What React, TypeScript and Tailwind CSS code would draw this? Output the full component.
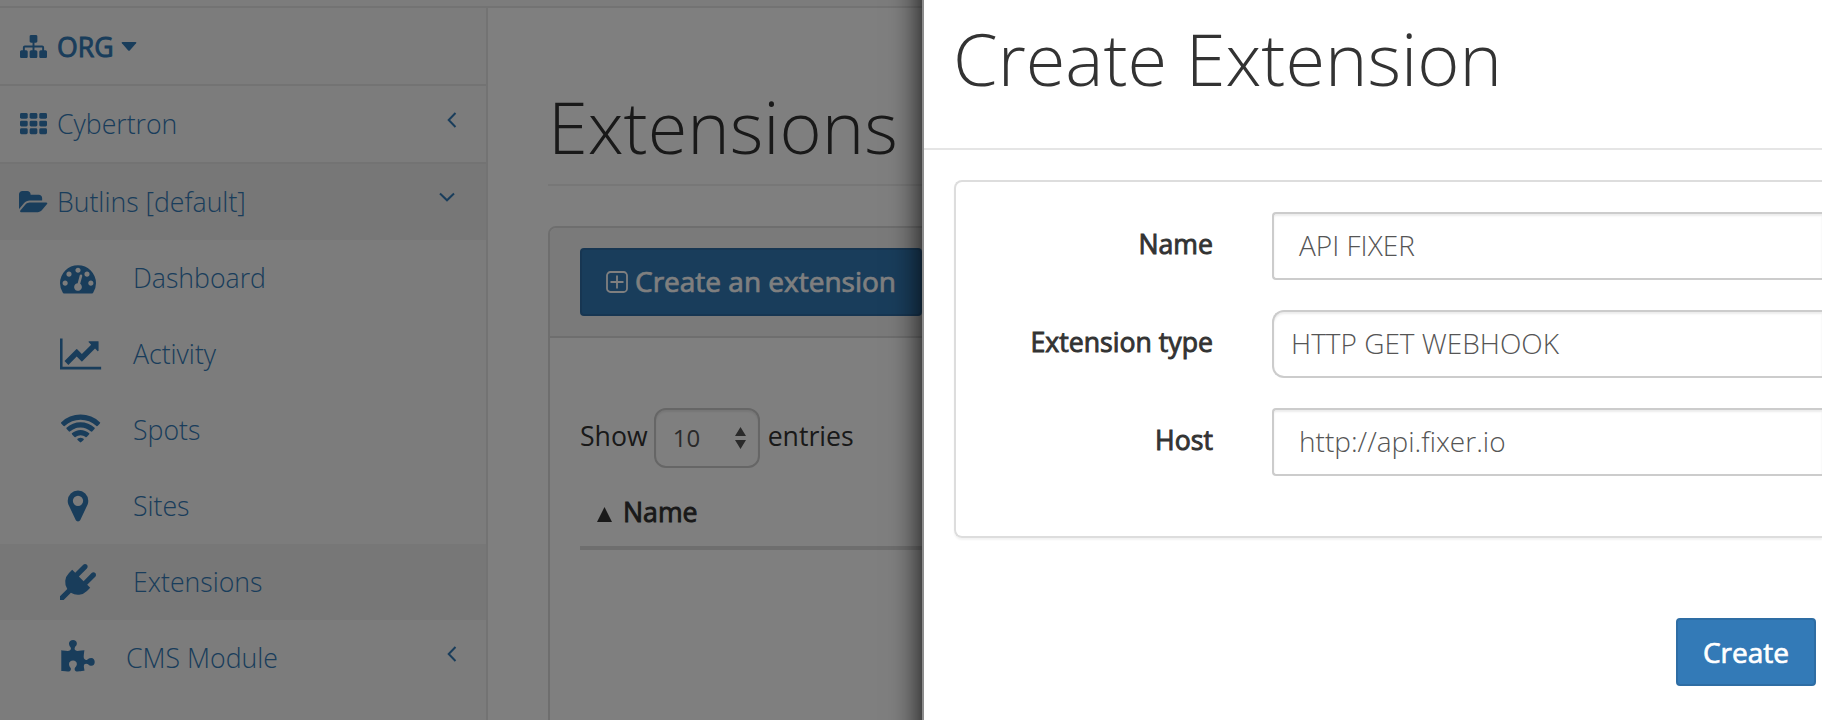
import React from "react";

const PATHS = {
  sitemap:
    "M1792 1248v320q0 40-28 68t-68 28h-320q-40 0-68-28t-28-68v-320q0-40 28-68t68-28h96v-192h-512v192h96q40 0 68 28t28 68v320q0 40-28 68t-68 28h-320q-40 0-68-28t-28-68v-320q0-40 28-68t68-28h96v-192h-512v192h96q40 0 68 28t28 68v320q0 40-28 68t-68 28h-320q-40 0-68-28t-28-68v-320q0-40 28-68t68-28h96v-192q0-52 38-90t90-38h512v-192h-96q-40 0-68-28t-28-68v-320q0-40 28-68t68-28h320q40 0 68 28t28 68v320q0 40-28 68t-68 28h-96v192h512q52 0 90 38t38 90v192h96q40 0 68 28t28 68z",
  folder:
    "M1879 952q0 31-31 66l-336 396q-43 51-120.5 86.5t-143.5 35.5h-1088q-34 0-60.5-13t-26.5-43q0-31 31-66l336-396q43-51 120.5-86.5t143.5-35.5h1088q34 0 60.5 13t26.5 43zm-343-344v160h-832q-94 0-197 47.5t-164 119.5l-337 396-5 6q0-4-.5-12.5t-.5-12.5v-960q0-92 66-158t158-66h320q92 0 158 66t66 158v32h544q92 0 158 66t66 158z",
  gauge:
    "M384 1152q0-53-37.5-90.5t-90.5-37.5-90.5 37.5-37.5 90.5 37.5 90.5 90.5 37.5 90.5-37.5 37.5-90.5zm192-448q0-53-37.5-90.5t-90.5-37.5-90.5 37.5-37.5 90.5 37.5 90.5 90.5 37.5 90.5-37.5 37.5-90.5zm428 481l101-382q6-26-7.5-48.5t-38.5-29.5-48 6.5-30 39.5l-101 382q-60 5-107 43.5t-63 98.5q-20 77 20 146t117 89 146-20 89-117q16-60-6-117t-72-91zm660-33q0-53-37.5-90.5t-90.5-37.5-90.5 37.5-37.5 90.5 37.5 90.5 90.5 37.5 90.5-37.5 37.5-90.5zm-640-640q0-53-37.5-90.5t-90.5-37.5-90.5 37.5-37.5 90.5 37.5 90.5 90.5 37.5 90.5-37.5 37.5-90.5zm448 192q0-53-37.5-90.5t-90.5-37.5-90.5 37.5-37.5 90.5 37.5 90.5 90.5 37.5 90.5-37.5 37.5-90.5zm320 448q0 261-141 483-19 29-54 29h-1402q-35 0-54-29-141-221-141-483 0-182 71-348t191-286 286-191 348-71 348 71 286 191 191 286 71 348z",
  chart:
    "M2048 1536v128h-2048v-1536h128v1408h1920zm-128-1248v435q0 21-19.5 29.5t-35.5-7.5l-121-121-633 633q-10 10-23 10t-23-10l-233-233-416 416-192-192 585-585q10-10 23-10t23 10l233 233 464-464-121-121q-16-16-7.5-35.5t29.5-19.5h435q14 0 23 9t9 23z",
  wifi: "M1024 1523q-20 0-93-73.5t-73-93.5q0-32 62.5-54t103.5-22 103.5 22 62.5 54q0 20-73 93.5t-93 73.5zm270-271q-2 0-40-25t-101.5-50-128.5-25-128.5 25-101 50-40.5 25q-18 0-93.5-75t-75.5-93q0-13 10-23 78-77 196-121t233-44 233 44 196 121q10 10 10 23 0 18-75.5 93t-93.5 75zm273-272q-11 0-23-8-136-105-252-154.5t-268-49.5q-85 0-170.5 22t-149 53-113.5 62-79 53-31 22q-17 0-92-75t-75-93q0-12 10-22 132-132 320-205t380-73 380 73 320 205q10 10 10 22 0 18-75 93t-92 75zm271-271q-11 0-22-9-179-157-371.5-236.5t-420.5-79.5-420.5 79.5-371.5 236.5q-11 9-22 9-17 0-92.5-75t-75.5-93q0-13 10-23 187-186 445-288t527-102 527 102 445 288q10 10 10 23 0 18-75.5 93t-92.5 75z",
  marker:
    "M1152 640q0-106-75-181t-181-75-181 75-75 181 75 181 181 75 181-75 75-181zm256 0q0 109-33 179l-364 774q-16 33-47.5 52t-67.5 19-67.5-19-46.5-52l-365-774q-33-70-33-179 0-212 150-362t362-150 362 150 150 362z",
  plug: "M1755 453q37 38 37 90.5t-37 90.5l-401 400 150 150-160 160q-163 163-389.5 186.5t-411.5-100.5l-362 362h-181v-181l362-362q-124-185-100.5-411.5t186.5-389.5l160-160 150 150 400-401q38-37 91-37t90 37 37 90.5-37 90.5l-400 401 234 234 401-400q38-37 91-37t90 37z",
  puzzle:
    "M1728 1098q0 81-44.5 135t-123.5 54q-41 0-77.5-17.5t-59-38-56.5-38-71-17.5q-110 0-110 124 0 39 16 115t15 115v5q-22 0-33 1-34 3-97.5 11.5t-115.5 13.5-98 5q-61 0-103-26.5t-42-83.5q0-37 17.5-71t38-56.5 38-59 17.5-77.5q0-79-54-123.5t-135-44.5q-84 0-143 45.5t-59 127.5q0 43 15 83t33.5 64.5 33.5 53 15 50.5q0 45-46 89-37 35-117 35-95 0-245-24-9-2-27.5-4t-27.5-4l-13-2q-1 0-3-1-2 0-2-1v-1024q2 1 17.5 3.5t34 5 21.5 3.5q150 24 245 24 80 0 117-35 46-44 46-89 0-22-15-50.5t-33.5-53-33.5-64.5-15-83q0-82 59-127.5t144-45.5q80 0 134 44.5t54 123.5q0 41-17.5 77.5t-38 59-38 56.5-17.5 71q0 57 42 83.5t103 26.5q64 0 180-15t163-17v2q-1 2-3.5 17.5t-5 34-3.5 21.5q-24 150-24 245 0 80 35 117 44 46 89 46 22 0 50.5-15t53-33.5 64.5-33.5 83-15q82 0 127.5 59t45.5 143z",
};

type IconName = keyof typeof PATHS;

function Icon({ name, className }: { name: IconName; className: string }) {
  return (
    <svg viewBox="0 0 1792 1792" fill="currentColor" className={`shrink-0 overflow-visible ${className}`}>
      <path d={PATHS[name]} />
    </svg>
  );
}

function GridIcon({ className }: { className: string }) {
  const cols = [0, 640, 1280];
  const rows = [128, 640, 1152];
  return (
    <svg viewBox="0 0 1792 1792" fill="currentColor" className={`shrink-0 ${className}`}>
      {rows.map((y) => cols.map((x) => <rect key={`${x}-${y}`} x={x} y={y} width="512" height="384" rx="96" />))}
    </svg>
  );
}

function AngleLeft() {
  return (
    <svg viewBox="0 0 10 16" className="mr-[29px] mb-[9px] ml-auto h-4 w-[10px]" fill="none" stroke="currentColor" strokeWidth="2">
      <path d="M8.5 1 1.700 8l6.800 7" />
    </svg>
  );
}

function AngleDown() {
  return (
    <svg viewBox="0 0 16 10" className="mr-[31px] mb-[10px] ml-auto h-[10px] w-4" fill="none" stroke="currentColor" strokeWidth="2">
      <path d="M1 1.500 8 8.300l7-6.800" />
    </svg>
  );
}

const SUB_ITEMS: { icon: IconName; label: string; active?: boolean }[] = [
  { icon: "gauge", label: "Dashboard" },
  { icon: "chart", label: "Activity" },
  { icon: "wifi", label: "Spots" },
  { icon: "marker", label: "Sites" },
  { icon: "plug", label: "Extensions", active: true },
];

function Sidebar() {
  return (
    <nav className="w-[488px] shrink-0 border-r-2 border-[#e7e7e7] bg-[#f8f8f8] text-[#337ab7]">
      <div className="flex h-[78px] items-center border-b-2 border-[#e7e7e7] pl-[20px]">
        <Icon name="sitemap" className="size-[27px]" />
        <span className="mt-0.5 ml-[10px] font-normal [-webkit-text-stroke:0.9px_currentColor]">ORG</span>
        <svg viewBox="0 0 16 9" fill="currentColor" className="ml-[7px] h-[9px] w-4">
          <path d="M1.500 0h13q1.500 0 .6 1.200L9 8.300q-1 1-2 0L.9 1.200Q0 0 1.500 0Z" />
        </svg>
      </div>
      <div className="flex h-[78px] items-center border-b-2 border-[#e7e7e7] pl-[20px]">
        <GridIcon className="size-[27px]" />
        <span className="ml-[10px]">Cybertron</span>
        <AngleLeft />
      </div>
      <div className="flex h-[76px] items-center bg-[#eee] pl-[19px]">
        <Icon name="folder" className="size-[27px]" />
        <span className="ml-[11px]">Butlins [default]</span>
        <AngleDown />
      </div>
      {SUB_ITEMS.map((item) => (
        <div key={item.label} className={`flex h-[76px] items-center pl-[60px] ${item.active ? "bg-[#eee]" : ""}`}>
          <Icon name={item.icon} className="size-[36px]" />
          <span className="ml-[37px]">{item.label}</span>
        </div>
      ))}
      <div className="flex h-[76px] items-center pl-[60px]">
        <Icon name="puzzle" className="size-[36px]" />
        <span className="ml-[30px]">CMS Module</span>
        <AngleLeft />
      </div>
    </nav>
  );
}

function Content() {
  return (
    <main className="flex-1 pt-[69px] pl-[60px]">
      <div className="h-[109px] border-b-2 border-[#eee]">
        <h1 className="text-[72px] leading-[98px] text-[#333]">Extensions</h1>
      </div>
      <section className="mt-10 h-[600px] rounded-lg border-2 border-[#ddd] bg-white">
        <div className="h-[110px] rounded-t-md border-b-2 border-[#ddd] bg-[#f5f5f5] px-[30px] py-5">
          <button className="flex h-[68px] w-[342px] items-center rounded border-2 border-[#2e6da4] bg-[#337ab7] pl-6 text-[28px] text-white">
            <svg viewBox="0 0 22 22" fill="none" stroke="currentColor" strokeWidth="1.800" className="size-[22px]">
              <rect x="1" y="1" width="20" height="20" rx="3.500" />
              <path d="M11 4.500v13M4.500 11h13" />
            </svg>
            <span className="ml-[7px] pb-0.5 font-normal [-webkit-text-stroke:0.7px_currentColor]">Create an extension</span>
          </button>
        </div>
        <div className="px-[30px] pt-[70px] font-normal text-[#333]">
          <div className="flex h-[60px] items-center">
            <span className="pb-1">Show</span>
            <span className="mr-[8px] ml-[6px] flex h-[60px] w-[106px] items-center justify-between rounded-xl border-2 border-[#ccc] bg-white pr-[12px] pl-[17px] text-[24px] text-[#555] shadow-[inset_0_2px_2px_rgba(0,0,0,0.075)]">
              <span className="pb-px">10</span>
              <svg viewBox="0 0 11 22" className="h-[22px] w-[11px] fill-[#555]">
                <path d="M5.500 0 11 9H0ZM5.500 22 11 13H0Z" />
              </svg>
            </span>
            <span className="pb-1">entries</span>
          </div>
          <div className="flex h-[82px] items-center border-b-4 border-[#ddd] pl-[17px]">
            <svg viewBox="0 0 15 15" className="mt-[15px] size-[15px] fill-[#333]">
              <path d="M7.500 0 15 15H0Z" />
            </svg>
            <span className="mt-[10px] ml-[11px] [-webkit-text-stroke:0.9px_currentColor]">Name</span>
          </div>
        </div>
      </section>
    </main>
  );
}

function Field({ label, value, select }: { label: string; value: string; select?: boolean }) {
  return (
    <div className="flex h-[68px]">
      <label className="w-[257px] shrink-0 pt-[12px] text-right font-normal text-[#333] [-webkit-text-stroke:0.9px_currentColor]">
        {label}
      </label>
      <div
        className={`ml-[59px] flex flex-1 items-center border-2 border-r-0 border-[#ccc] bg-white pb-0.5 text-[28px] text-[#555] shadow-[inset_0_2px_2px_rgba(0,0,0,0.075)] ${
          select ? "rounded-l-xl pl-[17px]" : "rounded-l pl-[25px]"
        }`}
      >
        {value}
      </div>
    </div>
  );
}

function Drawer() {
  return (
    <aside className="absolute -inset-y-10 right-0 left-[922px] border-l-2 border-[#8c8c8c] bg-white py-10 shadow-[0_0_30px_rgba(0,0,0,0.9)]">
      <header className="h-[150px] border-b-2 border-[#e5e5e5] pt-[9px] pl-[29px]">
        <h2 className="text-[72px] leading-[98px] text-[#333]">Create Extension</h2>
      </header>
      <div className="pt-[30px] pl-[30px]">
        <div className="flex h-[358px] flex-col gap-[30px] rounded-l-lg border-2 border-r-0 border-[#ddd] pt-[30px] shadow-[0_2px_2px_rgba(0,0,0,0.05)]">
          <Field label="Name" value="API FIXER" />
          <Field label="Extension type" value="HTTP GET WEBHOOK" select />
          <Field label="Host" value="http://api.fixer.io" />
        </div>
        <div className="flex justify-end pt-20 pr-[6px]">
          <button className="h-[68px] w-[140px] rounded border-2 border-[#2e6da4] bg-[#337ab7] pb-px text-[28px] font-normal text-white [-webkit-text-stroke:0.7px_currentColor]">
            Create
          </button>
        </div>
      </div>
    </aside>
  );
}

export default function App() {
  return (
    <div className="relative h-[720px] w-[1822px] overflow-hidden bg-white font-['Open_Sans',sans-serif] text-[26.67px] leading-10 font-light">
      <div className="h-2 border-b-2 border-[#e7e7e7] bg-[#f8f8f8]" />
      <div className="flex h-[712px] overflow-hidden">
        <Sidebar />
        <Content />
      </div>
      <div className="absolute inset-0 bg-black/50" />
      <Drawer />
    </div>
  );
}
